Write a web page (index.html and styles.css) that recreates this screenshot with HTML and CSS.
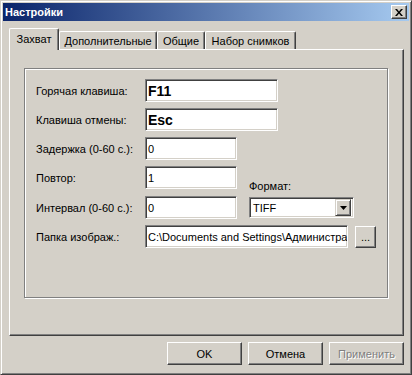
FILE: index.html
```html
<!DOCTYPE html>
<html lang="ru">
<head>
<meta charset="utf-8">
<title>Настройки</title>
<link rel="stylesheet" href="styles.css">
</head>
<body>
<div class="window">
  <div class="titlebar">
    <span class="title">Настройки</span>
    <div class="close">
      <svg width="8" height="7" viewBox="0 0 8 7"><path d="M0 0h2l2 2.5L6 0h2L5 3.5 8 7H6L4 4.5 2 7H0l3-3.5z" fill="#000"/></svg>
    </div>
  </div>
  <div class="tabs">
    <div class="tab active w1">Захват</div>
    <div class="tab w2">Дополнительные</div>
    <div class="tab w3">Общие</div>
    <div class="tab w4">Набор снимков</div>
  </div>
  <div class="panel">
    <div class="group">
      <div class="row">
        <span class="label">Горячая клавиша:</span>
        <div class="field wide bold">F11</div>
      </div>
      <div class="row">
        <span class="label">Клавиша отмены:</span>
        <div class="field wide bold">Esc</div>
      </div>
      <div class="row">
        <span class="label">Задержка (0-60 с.):</span>
        <div class="field small">0</div>
      </div>
      <div class="split">
        <div class="col">
          <div class="row">
            <span class="label">Повтор:</span>
            <div class="field small">1</div>
          </div>
          <div class="row r5">
            <span class="label">Интервал (0-60 с.):</span>
            <div class="field small">0</div>
          </div>
        </div>
        <div class="fmt">
          <span class="fmt-label">Формат:</span>
          <div class="combo">
            <span class="combo-text">TIFF</span>
            <div class="arrow">
              <svg width="7" height="4" viewBox="0 0 7 4"><path d="M0 0h7L3.5 4z" fill="#000"/></svg>
            </div>
          </div>
        </div>
      </div>
      <div class="row">
        <span class="label">Папка изображ.:</span>
        <div class="field path">C:\Documents and Settings\Администра</div>
        <div class="btn browse">...</div>
      </div>
    </div>
  </div>
  <div class="buttons">
    <div class="btn dlg">OK</div>
    <div class="btn dlg">Отмена</div>
    <div class="btn dlg disabled">Применить</div>
  </div>
</div>
</body>
</html>
```
FILE: styles.css
```css
* { box-sizing: border-box; }
html, body { margin: 0; padding: 0; }
body {
  width: 412px;
  height: 375px;
  overflow: hidden;
  background: #D4D0C8;
  font-family: "Liberation Sans", Arial, sans-serif;
  font-size: 11px;
  color: #000;
}
.window {
  width: 412px;
  height: 375px;
  border: 1px solid;
  border-color: #D4D0C8 #404040 #404040 #D4D0C8;
  box-shadow: inset 1px 1px #fff, inset -1px -1px #808080;
  padding: 2px;
  background: #D4D0C8;
  display: flex;
  flex-direction: column;
}
.titlebar {
  flex: none;
  height: 18px;
  background: linear-gradient(to right, #0A246A, #A6CAF0);
  display: flex;
  align-items: center;
  justify-content: space-between;
  padding: 0 2px;
}
.title {
  color: #fff;
  font-weight: bold;
  font-size: 11px;
}
.close {
  width: 16px;
  height: 14px;
  background: #D4D0C8;
  border: 1px solid;
  border-color: #fff #404040 #404040 #fff;
  box-shadow: inset -1px -1px #808080;
  display: flex;
  align-items: center;
  justify-content: center;
  padding-right: 1px;
}
.close svg { display: block; }
.tabs {
  flex: none;
  display: flex;
  align-items: flex-end;
  height: 21px;
  margin: 7px 0 0 6px;
  position: relative;
  z-index: 1;
}
.tab {
  height: 18px;
  border-top: 1px solid #fff;
  border-left: 1px solid #fff;
  border-right: 1px solid #404040;
  box-shadow: inset -1px 0 #808080;
  border-radius: 2px 2px 0 0;
  background: #D4D0C8;
  display: flex;
  align-items: center;
  justify-content: center;
  white-space: nowrap;
}
.tab.active {
  height: 22px;
  margin-bottom: -1px;
  padding-bottom: 2px;
}
.w1 { width: 50px; }
.w2 { width: 98px; }
.w3 { width: 48px; }
.w4 { width: 91px; }
.panel {
  flex: none;
  margin-left: 6px;
  width: 395px;
  height: 287px;
  border: 1px solid;
  border-color: #fff #404040 #404040 #fff;
  box-shadow: inset -1px -1px #808080;
  padding: 18px 0 0 14px;
}
.group {
  width: 364px;
  height: 230px;
  border: 1px solid #808080;
  box-shadow: inset 1px 1px #fff, 1px 1px #fff;
  padding: 10px 0 0 11px;
}
.row {
  display: flex;
  align-items: center;
  height: 23px;
  margin-bottom: 6px;
}
.label {
  width: 109px;
  flex: none;
  white-space: nowrap;
}
.field {
  height: 23px;
  background: #fff;
  border: 1px solid;
  border-color: #808080 #fff #fff #808080;
  box-shadow: inset 1px 1px #404040, inset -1px -1px #D4D0C8;
  padding: 0 2px 0 2px;
  display: flex;
  align-items: center;
  white-space: nowrap;
  overflow: hidden;
}
.bold {
  font-weight: bold;
  font-size: 14px;
}
.wide { width: 133px; }
.small { width: 92px; }
.path { width: 203px; }
.split {
  display: flex;
}
.r5 { margin-top: 7px; }
.fmt {
  display: flex;
  flex-direction: column;
  justify-content: flex-end;
  margin-left: 12px;
  padding-bottom: 7px;
}
.fmt-label {
  margin-bottom: 5px;
}
.combo {
  width: 105px;
  height: 21px;
  background: #fff;
  border: 1px solid;
  border-color: #808080 #fff #fff #808080;
  box-shadow: inset 1px 1px #404040, inset -1px -1px #D4D0C8;
  padding: 2px;
  display: flex;
  align-items: center;
  justify-content: space-between;
}
.combo-text {
  padding-left: 1px;
}
.arrow {
  width: 16px;
  height: 17px;
  background: #D4D0C8;
  border: 1px solid;
  border-color: #D4D0C8 #404040 #404040 #D4D0C8;
  box-shadow: inset 1px 1px #fff, inset -1px -1px #808080;
  display: flex;
  align-items: center;
  justify-content: center;
}
.arrow svg { display: block; }
.btn {
  background: #D4D0C8;
  border: 1px solid;
  border-color: #fff #404040 #404040 #fff;
  box-shadow: inset -1px -1px #808080;
  display: flex;
  align-items: center;
  justify-content: center;
}
.browse {
  width: 21px;
  height: 22px;
  margin-left: 7px;
  align-items: flex-end;
  padding-bottom: 4px;
  line-height: 1;
}
.buttons {
  flex: none;
  display: flex;
  justify-content: flex-end;
  gap: 6px;
  margin-top: 6px;
  padding-right: 5px;
}
.dlg {
  width: 75px;
  height: 23px;
}
.disabled {
  color: #808080;
  text-shadow: 1px 1px #fff;
}
```
